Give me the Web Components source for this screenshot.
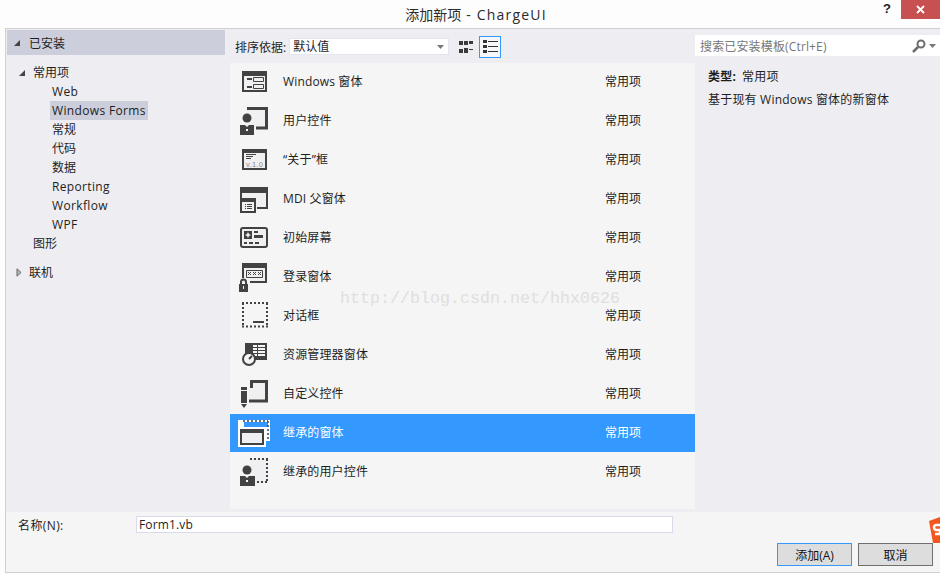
<!DOCTYPE html>
<html>
<head>
<meta charset="utf-8">
<title>添加新项 - ChargeUI</title>
<style>
    html, body { margin: 0; height: 100%; background: #fdfdfd; overflow: hidden; }
    body {
        font-family: "Open Sans", "Noto Sans CJK SC", sans-serif;
        font-size: 12px;
        color: #1e1e1e;
    }
</style>
</head>
<body>
<add-item-dialog></add-item-dialog>

<script>
const icons = {
    windows: `<path fill="#f0eff1" d="M4 5h25v21H4z"/><path fill="#424242" fill-rule="evenodd" d="M4 5h25v21H4zM6 10v14h21V10z"/><path fill="#424242" d="M9 12h5v2H9zM9 20h5v2H9z"/><path fill="none" stroke="#424242" d="M15.500 11.500h10v4h-10zM15.500 18.500h10v4h-10z"/>`,
    control: `<path fill="#f0eff1" d="M9 3h20v20H9z"/><path fill="none" stroke="#424242" stroke-width="3" d="M9 3.500h19.500v19.500H18"/><circle cx="9" cy="13" r="4.500" fill="#424242"/><path fill="#424242" d="M2 20h5l2 2 2-2h5v10H2z"/><path fill="#f5f5f5" d="M8 24h2v2H8z"/>`,
    about: `<path fill="#f0eff1" d="M4 5h25v21H4z"/><path fill="#424242" fill-rule="evenodd" d="M4 5h25v21H4zM6 9v15h21V9z"/><path fill="#424242" d="M8 10h10v1H8zM8 12h7v1H8zM8 14h5v1H8z"/><text x="8" y="23" font-family="Liberation Sans" font-size="7.500" letter-spacing=".3" fill="#8a8a8a">v.1.0</text>`,
    mdi: `<path fill="#f0eff1" d="M2 10h28v16H2z"/><path fill="#424242" d="M2 4h28v6H2zM28 10h2v16H19v-2h9zM2 10h2v5H2z"/><path fill="#424242" fill-rule="evenodd" d="M2 15h16v15H2zM4 19v9h12v-9z"/><path fill="#424242" d="M7 21h1v1H7zM9 21h5v1H9zM7 23h1v1H7zM9 23h5v1H9zM7 25h1v1H7zM9 25h5v1H9z"/>`,
    splash: `<rect x="3" y="6" width="26" height="19" rx="2" fill="#f0eff1" stroke="#424242" stroke-width="2"/><path fill="#424242" fill-rule="evenodd" d="M6 9h8v8H6zM10 10l-1 2-2 1 2 1 1 2 1-2 2-1-2-1z"/><path fill="#424242" d="M16 9h4v2h-4zM16 13h9v3h-9zM6 20h3v2H6zM11 20h4v2h-4zM17 20h4v2h-4z"/>`,
    login: `<path fill="#f0eff1" d="M4 2h25v20H4z"/><path fill="#424242" fill-rule="evenodd" d="M4 2h25v20H4zM6 7v13h21V7z"/><path fill="none" stroke="#424242" d="M8.500 9.500h16v7h-16z"/><path fill="none" stroke="#424242" d="M10 11l3 3M13 11l-3 3M15 11l3 3M18 11l-3 3M20 11l3 3M23 11l-3 3"/><path fill="#f5f5f5" d="M0 17h12v15H0z"/><path fill="none" stroke="#424242" stroke-width="2" d="M3 23v-2a2.500 2.500 0 0 1 5 0v2"/><path fill="#424242" fill-rule="evenodd" d="M1 23h9v8H1zM5 25v3h1v-3z"/>`,
    dialog: `<path fill="none" stroke="#424242" stroke-width="2" stroke-dasharray="2 2" d="M4 3h26M5 3v24M29 3v24M4 26.500h26"/><path fill="#424242" d="M15 21h11v2H15z"/>`,
    explorer: `<path fill="#424242" fill-rule="evenodd" d="M7 4h22v17H14v-3H7zM15 6v2h4V6zM20 6v2h7V6zM15 9v2h4V9zM20 9v2h7V9zM15 12v2h4v-2zM20 12v2h7v-2zM15 15v2h4v-2zM20 15v2h7v-2z"/><circle cx="11" cy="20" r="6" fill="#f5f5f5" stroke="#424242" stroke-width="2"/><path stroke="#424242" stroke-width="2" d="M11 20l3-3"/>`,
    custom: `<path fill="#f0eff1" d="M11 4h18v19H11z"/><path fill="none" stroke="#424242" stroke-width="3" d="M13.500 10V3.500h15v19.500H11"/><path fill="#f5f5f5" d="M1 7h10v25H1z"/><path fill="#424242" d="M3 9h6v3H3zM3 13h6v12H3zM3 26h6l-3 4z"/>`,
    inherited: `<path fill="#fff" d="M0 3h32v21h-4v6H0z"/><path fill="#3399ff" d="M6 5h24v5H6z"/><path fill="none" stroke="#424242" stroke-width="1.500" stroke-dasharray="2 2" d="M5 4h25M30 4v18"/><path fill="#fff" d="M0 10h28v20H0z"/><path fill="#424242" fill-rule="evenodd" d="M2 12h24v16H2zM4 16v10h20V16z"/><path fill="#f0eff1" d="M4 16h20v10H4z"/>`,
    inheritedControl: `<path fill="#f0eff1" d="M12 3h18v24H12z"/><path fill="none" stroke="#424242" stroke-width="2" stroke-dasharray="2 2" d="M12 3h18M29 3v24M29 26H18"/><circle cx="9" cy="14" r="4.500" fill="#424242"/><path fill="#424242" d="M2 20h5l2 2 2-2h6v10H2z"/><path fill="#f5f5f5" d="M8 24h2v2H8z"/>`
};

class DialogTitle extends HTMLElement {
    constructor() {
        super();
        this.attachShadow({ mode: 'open' });
        this.shadowRoot.innerHTML = `
            <style>
                :host {
                    display: flex;
                    height: 28px;
                    justify-content: center;
                    align-items: center;
                    position: relative;
                    font-size: 14px;
                    color: #2b2b2b;
                    padding-left: 12px;
                }
                .latin { letter-spacing: 1.2px; margin-left: 5px; }
                .help {
                    position: absolute;
                    left: 883px;
                    top: 0;
                    font: bold 13px/17px "Liberation Sans", sans-serif;
                    color: #222;
                }
                .close {
                    position: absolute;
                    left: 901px;
                    top: 0;
                    width: 39px;
                    height: 19px;
                    background: #c75050;
                    display: flex;
                    align-items: center;
                    justify-content: center;
                }
            </style>
            <span><slot></slot></span>
            <span class="latin"><slot name="latin"></slot></span>
            <span class="help">?</span>
            <span class="close">
                <svg width="9" height="9" viewBox="0 0 9 9"><path d="M1 1l7 7M8 1l-7 7" stroke="#fff" stroke-width="1.800"/></svg>
            </span>
        `;
    }
}

class TreeRow extends HTMLElement {
    constructor() {
        super();
        this.attachShadow({ mode: 'open' });
        this.shadowRoot.innerHTML = `
            <style>
                :host {
                    display: block;
                    height: 19px;
                    line-height: 19px;
                    white-space: nowrap;
                }
                span {
                    display: inline-block;
                    padding: 0 2px;
                    letter-spacing: var(--spacing, 0);
                }
                :host([selected]) span { background: #cccedb; }
                :host([group]) { padding-left: 25px; }
                :host([leaf]) { padding-left: 44px; }
                svg { position: absolute; margin: 6px 0 0 -13px; }
                :host([leaf]) svg { display: none; }
            </style>
            <svg width="8" height="8" viewBox="0 0 8 8"><path d="M7 1v6H1z" fill="#444"/></svg>
            <span><slot></slot></span>
        `;
    }
}

class TreePanel extends HTMLElement {
    constructor() {
        super();
        this.attachShadow({ mode: 'open' });
        this.shadowRoot.innerHTML = `
            <style>
                :host {
                    display: block;
                    background: #eeeef2;
                }
                .head {
                    height: 25px;
                    margin: 1px 5px 0 1px;
                    background: #cccedb;
                    display: flex;
                    align-items: center;
                    gap: 8px;
                    padding-left: 6px;
                }
                .list { padding-top: 8px; }
                .online { margin-top: 10px; padding-left: 21px; height: 19px; line-height: 19px; position: relative; }
                .online svg { position: absolute; left: 10px; top: 5px; }
                .online span { padding-left: 2px; }
            </style>
            <div class="head">
                <svg width="8" height="8" viewBox="0 0 8 8"><path d="M7 1v6H1z" fill="#444"/></svg>
                <span>已安装</span>
            </div>
            <div class="list">
                <tree-row group>常用项</tree-row>
                <tree-row leaf style="--spacing:.35px">Web</tree-row>
                <tree-row leaf selected style="--spacing:.35px">Windows Forms</tree-row>
                <tree-row leaf>常规</tree-row>
                <tree-row leaf>代码</tree-row>
                <tree-row leaf>数据</tree-row>
                <tree-row leaf style="--spacing:.35px">Reporting</tree-row>
                <tree-row leaf style="--spacing:.35px">Workflow</tree-row>
                <tree-row leaf style="--spacing:.35px">WPF</tree-row>
                <tree-row leaf style="margin-left:-19px">图形</tree-row>
                <div class="online">
                    <svg width="6" height="9" viewBox="0 0 6 9"><path d="M1 .800l4 3.700-4 3.700z" fill="#bbb" stroke="#666"/></svg>
                    <span>联机</span>
                </div>
            </div>
        `;
    }
}

class ListToolbar extends HTMLElement {
    constructor() {
        super();
        this.attachShadow({ mode: 'open' });
        this.shadowRoot.innerHTML = `
            <style>
                :host {
                    display: flex;
                    align-items: center;
                    height: 34px;
                    padding: 1px 0 0 5px;
                    box-sizing: border-box;
                    background: #eeeef2;
                }
                .select {
                    width: 160px;
                    height: 17px;
                    line-height: 16px;
                    box-sizing: border-box;
                    margin-left: 3px;
                    padding-left: 3px;
                    background: #fff;
                    border: 1px solid #e4e5ee;
                    position: relative;
                }
                .select svg { position: absolute; right: 3px; top: 6px; }
                .view {
                    box-sizing: border-box;
                    display: flex;
                    align-items: center;
                    justify-content: center;
                }
                .grid { width: 21px; height: 21px; margin-left: 6px; }
                .list { width: 22px; height: 22px; margin-left: 3px; border: 1px solid #3399ff; background: #f7f7f9; }
            </style>
            <span>排序依据:</span>
            <div class="select">默认值
                <svg width="8" height="5" viewBox="0 0 8 5"><path d="M0 0h7L3.500 4z" fill="#777"/></svg>
            </div>
            <div class="view grid">
                <svg width="14" height="14" viewBox="0 0 14 14" fill="#3a3a3a"><path d="M0 1h4v4H0zM5 1h4v4H5zM10 1h4v3h-4zM0 9h4v4H0zM5 8h4v5H5zM10 9h4v1h-4z"/></svg>
            </div>
            <div class="view list">
                <svg width="15" height="13" viewBox="0 0 15 13" fill="#333"><path d="M0 0h4v3H0zM5 1h10v1H5zM0 5h4v3H0zM5 6h10v1H5zM0 10h4v3H0zM5 11h10v1H5z"/></svg>
            </div>
        `;
    }
}

class TemplateRow extends HTMLElement {
    constructor() {
        super();
        this.attachShadow({ mode: 'open' });
        const icon = icons[this.getAttribute('icon')];
        this.shadowRoot.innerHTML = `
            <style>
                :host {
                    display: grid;
                    grid-template-columns: 45px 322px auto;
                    align-items: center;
                    height: 38px;
                    padding-left: 8px;
                    margin-bottom: 1px;
                    color: #1e1e1e;
                }
                :host([selected]) { background: #3399ff; color: #fff; }
                svg { display: block; }
                span { padding-bottom: 2px; }
                .name { letter-spacing: .15px; }
            </style>
            <svg width="32" height="32" viewBox="0 0 32 32">${icon}</svg>
            <span class="name"><slot></slot></span>
            <span>常用项</span>
        `;
    }
}

class TemplateList extends HTMLElement {
    constructor() {
        super();
        this.attachShadow({ mode: 'open' });
        this.shadowRoot.innerHTML = `
            <style>
                :host {
                    display: block;
                    position: relative;
                    height: 446px;
                    background: #f5f5f5;
                }
                .mark {
                    position: absolute;
                    left: 110px;
                    top: 225px;
                    font: 16.670px/22px "Liberation Mono", monospace;
                    color: #e0e0dc;
                    white-space: nowrap;
                }
            </style>
            <slot></slot>
            <span class="mark">http://blog.csdn.net/hhx0626</span>
        `;
    }
}

class SearchBox extends HTMLElement {
    constructor() {
        super();
        this.attachShadow({ mode: 'open' });
        this.shadowRoot.innerHTML = `
            <style>
                :host {
                    display: flex;
                    align-items: center;
                    height: 21px;
                    margin-top: 6px;
                    padding-left: 5px;
                    background: #fff;
                    color: #777;
                }
                span { flex: 1; letter-spacing: .15px; }
                svg { display: block; }
                .find { margin-right: 3px; }
                .more { margin-right: 4px; }
            </style>
            <span>搜索已安装模板(Ctrl+E)</span>
            <svg class="find" width="14" height="14" viewBox="0 0 14 14"><circle cx="9" cy="5" r="3.500" fill="none" stroke="#6d6d6d" stroke-width="2"/><path d="M6 8l-5 5" stroke="#6d6d6d" stroke-width="2.500"/></svg>
            <svg class="more" width="7" height="4" viewBox="0 0 7 4"><path d="M0 0h7L3.500 4z" fill="#777"/></svg>
        `;
    }
}

class InfoPanel extends HTMLElement {
    constructor() {
        super();
        this.attachShadow({ mode: 'open' });
        this.shadowRoot.innerHTML = `
            <style>
                :host { display: block; background: #eeeef2; }
                .box { padding: 1px 0 0 13px; }
                p { margin: 0; height: 23px; line-height: 23px; letter-spacing: .2px; }
                b { font-weight: 700; margin-right: 6px; }
            </style>
            <search-box></search-box>
            <div class="box">
                <p style="margin-top:8px"><b>类型:</b>常用项</p>
                <p>基于现有 Windows 窗体的新窗体</p>
            </div>
        `;
    }
}

class DialogButton extends HTMLElement {
    constructor() {
        super();
        this.attachShadow({ mode: 'open' });
        this.shadowRoot.innerHTML = `
            <style>
                :host {
                    display: flex;
                    align-items: center;
                    justify-content: center;
                    box-sizing: border-box;
                    width: 75px;
                    height: 23px;
                    background: #dddddd;
                    border: 1px solid #707070;
                    color: #111;
                }
                :host([primary]) { border-color: #3399ff; }
            </style>
            <slot></slot>
        `;
    }
}

class DialogFooter extends HTMLElement {
    constructor() {
        super();
        this.attachShadow({ mode: 'open' });
        this.shadowRoot.innerHTML = `
            <style>
                :host {
                    display: block;
                    position: relative;
                    height: 60px;
                    box-sizing: border-box;
                    padding: 4px 7px 0 12px;
                    background: #f5f5f5;
                }
                .name { display: flex; align-items: center; height: 17px; }
                .name label { width: 118px; letter-spacing: .4px; }
                .name input {
                    width: 537px;
                    height: 17px;
                    box-sizing: border-box;
                    border: 1px solid #d9daea;
                    padding: 0 2px;
                    margin: 0;
                    font: 12px "Open Sans", "Noto Sans CJK SC", sans-serif;
                    letter-spacing: .15px;
                    color: #1e1e1e;
                    outline: none;
                }
                .buttons { display: flex; justify-content: flex-end; gap: 6px; margin-top: 10px; }
                .logo { position: absolute; right: 0; top: 5px; display: block; }
            </style>
            <div class="name">
                <label>名称(N):</label>
                <input value="Form1.vb">
            </div>
            <div class="buttons">
                <dialog-button primary>添加(A)</dialog-button>
                <dialog-button>取消</dialog-button>
            </div>
            <svg class="logo" width="12" height="27" viewBox="0 0 12 27"><path d="M1 4l11-4v26H5z" fill="#f3561f"/><path d="M12 8H8.500a2 2 0 0 0 0 5H12v4H7" fill="none" stroke="#fff" stroke-width="2.500"/></svg>
        `;
    }
}

class AddItemDialog extends HTMLElement {
    constructor() {
        super();
        this.attachShadow({ mode: 'open' });
        this.shadowRoot.innerHTML = `
            <style>
                :host {
                    display: block;
                    width: 940px;
                    height: 574px;
                }
                .frame {
                    margin-left: 5px;
                    height: 545px;
                    box-sizing: border-box;
                    border: solid #d0d0d0;
                    border-width: 1px 0 1px 1px;
                }
                .body {
                    display: grid;
                    grid-template-columns: 224px 465px 245px;
                    height: 483px;
                    background: #eeeef2;
                }
                .middle { background: #eeeef2; }
            </style>
            <dialog-title>添加新项<span slot="latin">- ChargeUI</span></dialog-title>
            <div class="frame">
                <div class="body">
                    <tree-panel></tree-panel>
                    <div class="middle">
                        <list-toolbar></list-toolbar>
                        <template-list>
                            <template-row icon="windows">Windows 窗体</template-row>
                            <template-row icon="control">用户控件</template-row>
                            <template-row icon="about">“关于”框</template-row>
                            <template-row icon="mdi">MDI 父窗体</template-row>
                            <template-row icon="splash">初始屏幕</template-row>
                            <template-row icon="login">登录窗体</template-row>
                            <template-row icon="dialog">对话框</template-row>
                            <template-row icon="explorer">资源管理器窗体</template-row>
                            <template-row icon="custom">自定义控件</template-row>
                            <template-row icon="inherited" selected>继承的窗体</template-row>
                            <template-row icon="inheritedControl">继承的用户控件</template-row>
                        </template-list>
                    </div>
                    <info-panel></info-panel>
                </div>
                <dialog-footer></dialog-footer>
            </div>
        `;
    }
}

customElements.define('dialog-title', DialogTitle);
customElements.define('tree-row', TreeRow);
customElements.define('tree-panel', TreePanel);
customElements.define('list-toolbar', ListToolbar);
customElements.define('template-row', TemplateRow);
customElements.define('template-list', TemplateList);
customElements.define('search-box', SearchBox);
customElements.define('info-panel', InfoPanel);
customElements.define('dialog-button', DialogButton);
customElements.define('dialog-footer', DialogFooter);
customElements.define('add-item-dialog', AddItemDialog);
</script>
</body>
</html>
